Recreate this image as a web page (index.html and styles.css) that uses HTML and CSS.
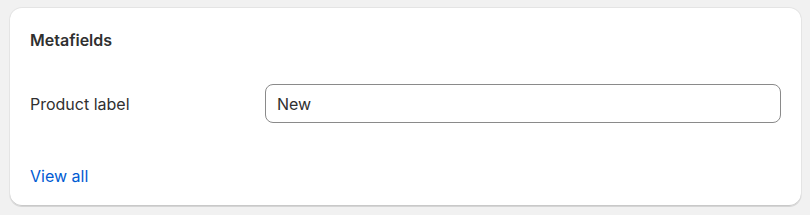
FILE: index.html
```html
<!DOCTYPE html>
<html lang="en">
<head>
    <meta charset="UTF-8">
    <meta name="viewport" content="width=device-width, initial-scale=1.0">
    <title>Metafields</title>
    <link rel="stylesheet" href="styles.css">
</head>
<body>
    <div class="card">
        <h2 class="card-title">Metafields</h2>

        <div class="field-row">
            <label class="field-label" for="product-label">Product label</label>
            <input type="text" class="field-input" id="product-label" value="New">
        </div>

        <a href="#" class="view-all">View all</a>
    </div>
</body>
</html>
```

FILE: styles.css
```css
body {
    font-family: Inter, "Noto Sans", sans-serif;
    margin: 0;
    padding: 8px 9px 8px 10px;
    background-color: #f1f1f1;
    color: #303030;
    font-size: 16px;
    line-height: 20px;
}

.card {
    background: white;
    border-radius: 12px;
    padding: 22px 20px 20px;
    box-shadow: 0 1px 0 0 rgba(26, 26, 26, 0.07),
                inset 0 -1px 0 0 #c9c9c9,
                0 0 0 1px rgba(0, 0, 0, 0.05);
}

.card-title {
    font-size: 16px;
    font-weight: 600;
    line-height: 20px;
    margin: 0 0 34px;
}

.field-row {
    display: grid;
    grid-template-columns: 235px 1fr;
    align-items: center;
    margin-bottom: 43px;
}

.field-label {
    color: #303030;
}

.field-input {
    font-family: inherit;
    font-size: 16px;
    color: #303030;
    height: 39px;
    box-sizing: border-box;
    padding: 0 11px;
    border: 1px solid #8a8a8a;
    border-radius: 8px;
    outline: none;
}

.view-all {
    color: #005bd3;
    text-decoration: none;
    display: block;
    width: max-content;
}
```
